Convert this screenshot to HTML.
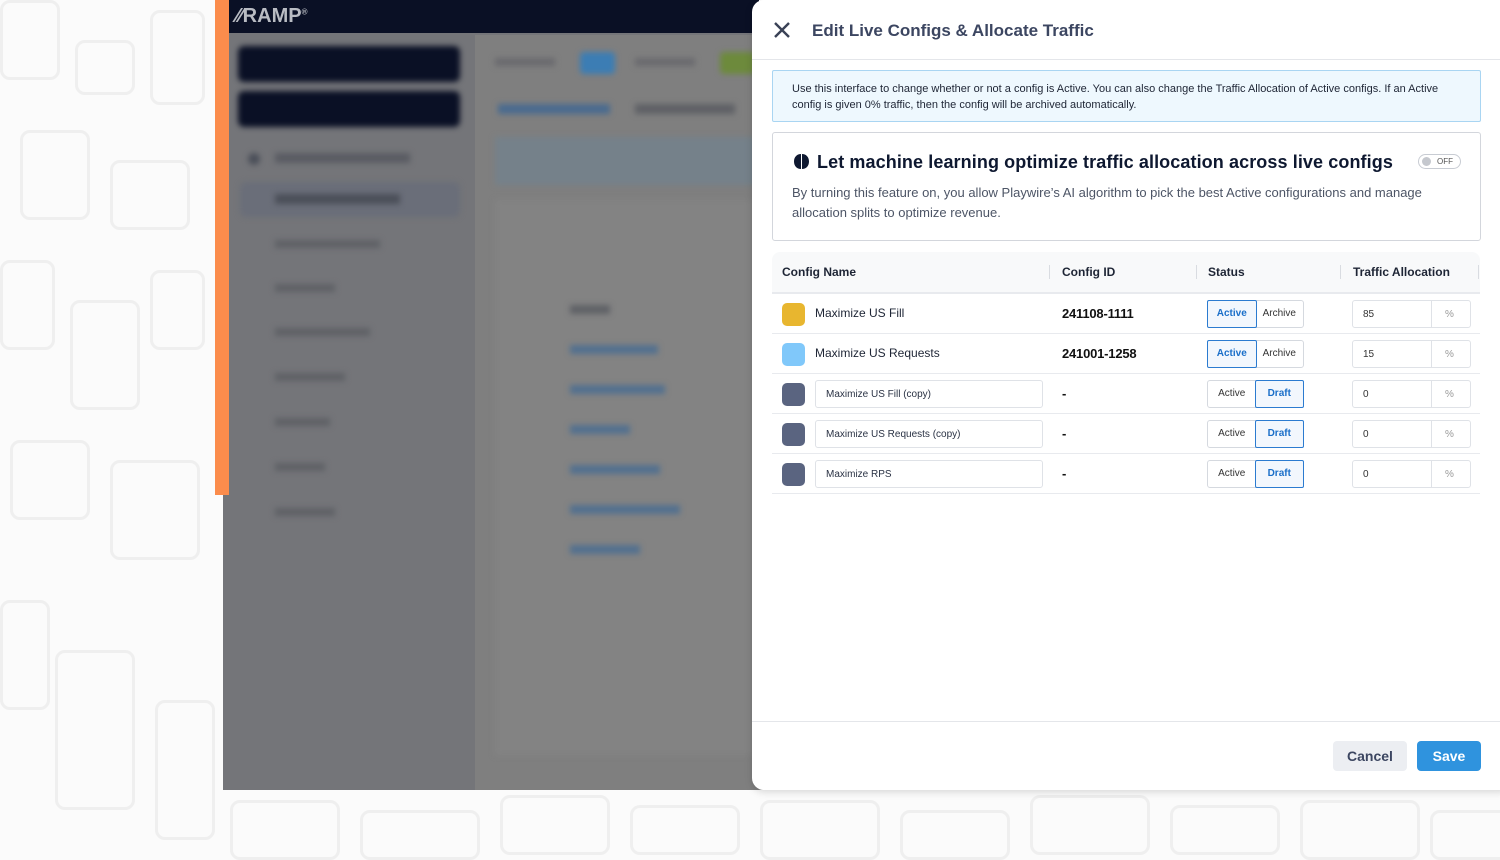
<!DOCTYPE html>
<html><head><meta charset="utf-8"><style>
*{box-sizing:border-box;margin:0;padding:0}
body{width:1500px;height:850px;overflow:hidden;background:#fbfbfb;font-family:"Liberation Sans",sans-serif;position:relative}
.abs{position:absolute}
.pat{position:absolute;border:3px solid #efefef;border-radius:10px}
.bl{filter:blur(3px)}
.modal{position:absolute;left:752px;top:0;width:760px;height:790px;background:#fff;border-radius:12px;box-shadow:0 2px 8px rgba(0,0,0,.15)}
.row{position:absolute;left:772px;width:708px;height:40px;border-bottom:1px solid #e8eaee}
.sw{position:absolute;left:10px;top:9px;width:23px;height:23px;border-radius:5px}
.t{position:absolute;font-size:13px;color:#1e2535}
.inp{position:absolute;left:43px;top:6px;width:228px;height:28px;border:1px solid #dfe2e7;border-radius:3px;font-size:10px;color:#2a3244;padding:8px 10px}
.seg{position:absolute;left:435px;top:6px;width:97px;height:28px;border:1px solid #d5d9df;border-radius:3px;font-size:10px;display:flex}
.seg div{flex:1;text-align:center;line-height:26px;color:#333}
.seg .on{border:1.5px solid #2b7bd0;background:#f2f7fd;color:#1a6fc9;font-weight:bold;border-radius:2px;margin:-1px}
.al{position:absolute;left:580px;top:6px;width:119px;height:28px;border:1px solid #dfe2e7;border-radius:3px;font-size:10px;color:#333}
.al span{position:absolute;top:8px}
.id{position:absolute;left:290px;top:12px;font-size:13px;color:#111;font-weight:bold;letter-spacing:-0.2px}
</style></head><body>
<div class="pat" style="left:0;top:0;width:60px;height:80px"></div>
<div class="pat" style="left:75px;top:40px;width:60px;height:55px"></div>
<div class="pat" style="left:150px;top:10px;width:55px;height:95px"></div>
<div class="pat" style="left:20px;top:130px;width:70px;height:90px"></div>
<div class="pat" style="left:110px;top:160px;width:80px;height:70px"></div>
<div class="pat" style="left:0;top:260px;width:55px;height:90px"></div>
<div class="pat" style="left:70px;top:300px;width:70px;height:110px"></div>
<div class="pat" style="left:150px;top:270px;width:55px;height:80px"></div>
<div class="pat" style="left:10px;top:440px;width:80px;height:80px"></div>
<div class="pat" style="left:110px;top:460px;width:90px;height:100px"></div>
<div class="pat" style="left:0;top:600px;width:50px;height:110px"></div>
<div class="pat" style="left:55px;top:650px;width:80px;height:160px"></div>
<div class="pat" style="left:155px;top:700px;width:60px;height:140px"></div>
<div class="pat" style="left:230px;top:800px;width:110px;height:60px"></div>
<div class="pat" style="left:360px;top:810px;width:120px;height:50px"></div>
<div class="pat" style="left:500px;top:795px;width:110px;height:60px"></div>
<div class="pat" style="left:630px;top:805px;width:110px;height:50px"></div>
<div class="pat" style="left:760px;top:800px;width:120px;height:60px"></div>
<div class="pat" style="left:900px;top:810px;width:110px;height:50px"></div>
<div class="pat" style="left:1030px;top:795px;width:120px;height:60px"></div>
<div class="pat" style="left:1170px;top:805px;width:110px;height:50px"></div>
<div class="pat" style="left:1300px;top:800px;width:120px;height:60px"></div>
<div class="pat" style="left:1430px;top:810px;width:80px;height:50px"></div>

<div class="abs" style="left:215px;top:0;width:14px;height:495px;background:#fb8c4c"></div>
<div class="abs" style="left:223px;top:495px;width:6px;height:295px;background:#747579"></div>
<div class="abs" style="left:229px;top:0;width:530px;height:790px;background:#747579"></div>
<div class="abs" style="left:229px;top:0;width:530px;height:33px;background:#0a1025"></div>
<div class="abs" style="left:236px;top:5px;font-size:20px;font-weight:bold;color:#b9bcc3">⁄⁄RAMP<sup style="font-size:8px">®</sup></div>
<div class="abs" style="left:475px;top:35px;width:290px;height:755px;background:#7f7f7f"></div>
<div class="abs bl" style="left:495px;top:200px;width:260px;height:555px;background:#838383"></div>
<div class="abs bl" style="left:238px;top:46px;width:222px;height:36px;background:#0a1025;border-radius:6px"></div>
<div class="abs bl" style="left:238px;top:91px;width:222px;height:36px;background:#0a1025;border-radius:6px"></div>
<div class="abs bl" style="left:240px;top:182px;width:220px;height:35px;background:#6a6e79;border-radius:6px"></div>
<div class="abs bl" style="left:248px;top:153px;width:12px;height:12px;background:#4b4f59;border-radius:50%"></div>
<div class="abs bl" style="left:275px;top:153px;width:135px;height:10px;background:#5a5c63"></div>
<div class="abs bl" style="left:275px;top:194px;width:125px;height:10px;background:#4b4f59"></div>
<div class="abs bl" style="left:275px;top:240px;width:105px;height:8px;background:#5f6166"></div>
<div class="abs bl" style="left:275px;top:284px;width:60px;height:8px;background:#5f6166"></div>
<div class="abs bl" style="left:275px;top:328px;width:95px;height:8px;background:#5f6166"></div>
<div class="abs bl" style="left:275px;top:373px;width:70px;height:8px;background:#5f6166"></div>
<div class="abs bl" style="left:275px;top:418px;width:55px;height:8px;background:#5f6166"></div>
<div class="abs bl" style="left:275px;top:463px;width:50px;height:8px;background:#5f6166"></div>
<div class="abs bl" style="left:275px;top:508px;width:60px;height:8px;background:#5f6166"></div>
<div class="abs bl" style="left:495px;top:58px;width:60px;height:8px;background:#6a6a6e"></div>
<div class="abs bl" style="left:580px;top:52px;width:35px;height:22px;background:#3c7db4;border-radius:4px"></div>
<div class="abs bl" style="left:635px;top:58px;width:60px;height:8px;background:#6a6a6e"></div>
<div class="abs bl" style="left:720px;top:52px;width:35px;height:22px;background:#6d8a3c;border-radius:4px"></div>
<div class="abs bl" style="left:495px;top:137px;width:260px;height:48px;background:#75818a"></div>
<div class="abs bl" style="left:498px;top:104px;width:112px;height:10px;background:#4a6b8f"></div>
<div class="abs bl" style="left:635px;top:104px;width:100px;height:10px;background:#5f6166"></div>
<div class="abs bl" style="left:570px;top:345px;width:88px;height:9px;background:#52708f"></div>
<div class="abs bl" style="left:570px;top:385px;width:95px;height:9px;background:#52708f"></div>
<div class="abs bl" style="left:570px;top:425px;width:60px;height:9px;background:#52708f"></div>
<div class="abs bl" style="left:570px;top:465px;width:90px;height:9px;background:#52708f"></div>
<div class="abs bl" style="left:570px;top:505px;width:110px;height:9px;background:#52708f"></div>
<div class="abs bl" style="left:570px;top:545px;width:70px;height:9px;background:#52708f"></div>
<div class="abs bl" style="left:570px;top:305px;width:40px;height:9px;background:#5f6166"></div>

<div class="modal"></div>
<svg class="abs" style="left:773px;top:21px" width="18" height="18" viewBox="0 0 18 18"><path d="M2 2L16 16M16 2L2 16" stroke="#3a4256" stroke-width="2.4"/></svg>
<div class="abs" style="left:812px;top:21px;font-size:17px;font-weight:bold;color:#3c4661">Edit Live Configs &amp; Allocate Traffic</div>
<div class="abs" style="left:752px;top:59px;width:748px;height:1px;background:#e4e6ea"></div>
<div class="abs" style="left:772px;top:70px;width:709px;height:52px;background:#eef8fe;border:1px solid #a9d5f2;border-radius:2px;font-size:11px;color:#1e2535;padding:10px 19px;line-height:16px">Use this interface to change whether or not a config is Active. You can also change the Traffic Allocation of Active configs. If an Active config is given 0% traffic, then the config will be archived automatically.</div>
<div class="abs" style="left:772px;top:132px;width:709px;height:109px;border:1.5px solid #d3d6dc;border-radius:3px"></div>
<svg class="abs" style="left:793px;top:153px" width="17" height="17" viewBox="0 0 17 17"><path d="M8 1C4 1 1 4 1 8.5S4 16 8 16Z M9 1c4 0 7 3 7 7.5S13 16 9 16Z" fill="#0e1830"/></svg>
<div class="abs" style="left:817px;top:152px;font-size:18px;font-weight:bold;color:#0e1830;letter-spacing:0.1px">Let machine learning optimize traffic allocation across live configs</div>
<div class="abs" style="left:1418px;top:154px;width:43px;height:15px;border:1px solid #c8ccd3;border-radius:8px;background:#fff"></div>
<div class="abs" style="left:1422px;top:157px;width:9px;height:9px;border-radius:50%;background:#c5c8ce"></div>
<div class="abs" style="left:1437px;top:157px;font-size:8px;color:#555">OFF</div>
<div class="abs" style="left:792px;top:183px;width:670px;font-size:13px;line-height:20px;color:#4d5566">By turning this feature on, you allow Playwire’s AI algorithm to pick the best Active configurations and manage allocation splits to optimize revenue.</div>

<div class="abs" style="left:772px;top:252px;width:708px;height:42px;background:#f8f9fa;border-radius:8px 8px 0 0;border-bottom:2px solid #e8eaee"></div>
<div class="t" style="left:782px;top:265px;font-weight:bold;font-size:12px">Config Name</div>
<div class="abs" style="left:1049px;top:265px;width:1px;height:14px;background:#d9dce1"></div>
<div class="t" style="left:1062px;top:265px;font-weight:bold;font-size:12px">Config ID</div>
<div class="abs" style="left:1196px;top:265px;width:1px;height:14px;background:#d9dce1"></div>
<div class="t" style="left:1208px;top:265px;font-weight:bold;font-size:12px">Status</div>
<div class="abs" style="left:1340px;top:265px;width:1px;height:14px;background:#d9dce1"></div>
<div class="t" style="left:1353px;top:265px;font-weight:bold;font-size:12px">Traffic Allocation</div>
<div class="abs" style="left:1478px;top:265px;width:1px;height:14px;background:#d9dce1"></div>

<div class="row" style="top:294px"><div class="sw" style="background:#e8b62f"></div><div class="t" style="left:43px;top:12px;font-size:12px">Maximize US Fill</div><div class="id">241108-1111</div><div class="seg"><div class="on">Active</div><div>Archive</div></div><div class="al"><span style="left:10px">85</span><span style="left:78px;border-left:1px solid #dfe2e7;height:28px;top:-1px"></span><span style="left:92px;color:#999">%</span></div></div>
<div class="row" style="top:334px"><div class="sw" style="background:#80c8fa"></div><div class="t" style="left:43px;top:12px;font-size:12px">Maximize US Requests</div><div class="id">241001-1258</div><div class="seg"><div class="on">Active</div><div>Archive</div></div><div class="al"><span style="left:10px">15</span><span style="left:78px;border-left:1px solid #dfe2e7;height:28px;top:-1px"></span><span style="left:92px;color:#999">%</span></div></div>
<div class="row" style="top:374px"><div class="sw" style="background:#5a6480"></div><div class="inp">Maximize US Fill (copy)</div><div class="id">-</div><div class="seg"><div>Active</div><div class="on">Draft</div></div><div class="al"><span style="left:10px">0</span><span style="left:78px;border-left:1px solid #dfe2e7;height:28px;top:-1px"></span><span style="left:92px;color:#999">%</span></div></div>
<div class="row" style="top:414px"><div class="sw" style="background:#5a6480"></div><div class="inp">Maximize US Requests (copy)</div><div class="id">-</div><div class="seg"><div>Active</div><div class="on">Draft</div></div><div class="al"><span style="left:10px">0</span><span style="left:78px;border-left:1px solid #dfe2e7;height:28px;top:-1px"></span><span style="left:92px;color:#999">%</span></div></div>
<div class="row" style="top:454px"><div class="sw" style="background:#5a6480"></div><div class="inp">Maximize RPS</div><div class="id">-</div><div class="seg"><div>Active</div><div class="on">Draft</div></div><div class="al"><span style="left:10px">0</span><span style="left:78px;border-left:1px solid #dfe2e7;height:28px;top:-1px"></span><span style="left:92px;color:#999">%</span></div></div>

<div class="abs" style="left:752px;top:721px;width:748px;height:1px;background:#e4e6ea"></div>
<div class="abs" style="left:1333px;top:741px;width:74px;height:30px;background:#eceef2;border-radius:4px;font-size:14px;font-weight:bold;color:#3c4661;text-align:center;line-height:30px">Cancel</div>
<div class="abs" style="left:1417px;top:741px;width:64px;height:30px;background:#2f93de;border-radius:4px;font-size:14px;font-weight:bold;color:#fff;text-align:center;line-height:30px">Save</div>
</body></html>
